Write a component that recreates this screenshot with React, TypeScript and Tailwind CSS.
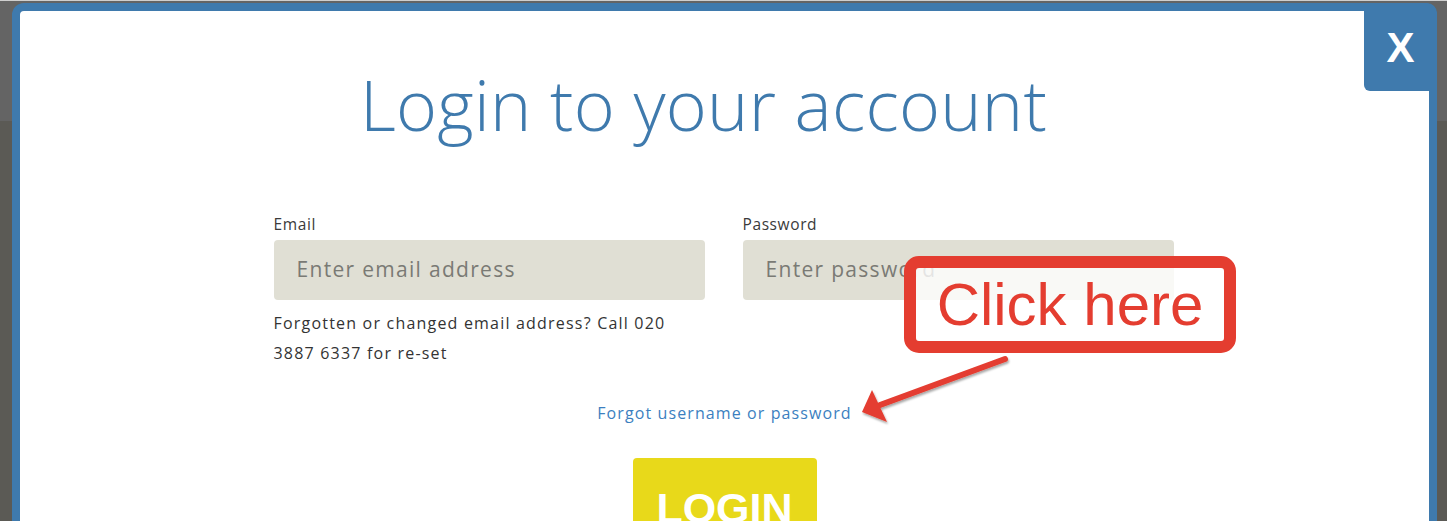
import React from "react";

export default function App() {
  return (
    <div
      className="relative w-[1447px] h-[521px] overflow-hidden bg-[linear-gradient(to_bottom,#cfcfcf_0px,#cfcfcf_1px,#646464_1px,#646464_121px,#5b5a55_121px)]"
      style={{ fontFamily: '"Open Sans", "Noto Sans", sans-serif' }}
    >
      <div className="relative ml-[12px] mt-[3px] w-[1425px] h-[600px] rounded-[12px] border-8 border-[#3f7aad] bg-white">
        <div className="absolute -top-[8px] -right-[8px] flex h-[88px] w-[73px] items-center justify-center rounded-tr-[10px] rounded-bl-[6px] bg-[#3f7aad] pt-[2px]">
          <span
            className="text-[42px] font-bold leading-none text-white"
            style={{ fontFamily: '"Liberation Sans", Arial, sans-serif' }}
          >
            X
          </span>
        </div>

        <h1 className="pt-[48px] pr-[42px] text-center text-[70px] font-light leading-[90px] tracking-[0.25px] text-[#3f7aad]">
          Login to your account
        </h1>

        <div className="mx-auto mt-[63px] grid w-[900px] -translate-x-[1px] grid-cols-2 gap-x-[38px]">
          <div>
            <label className="block text-[15.5px] leading-[24px] tracking-[0.6px] text-[#3a3a3a]">Email</label>
            <div className="mt-[4px] flex h-[60px] items-center rounded-[4px] bg-[#e0dfd4] pl-[23px] text-[21px] tracking-[1.3px] text-[#7a7a74]">
              Enter email address
            </div>
            <p className="mt-[8px] w-[420px] text-[16px] leading-[30px] tracking-[1.2px] text-[#333333]">
              Forgotten or changed email address? Call 020 3887 6337 for re-set
            </p>
          </div>
          <div>
            <label className="block text-[15.5px] leading-[24px] tracking-[0.6px] text-[#3a3a3a]">Password</label>
            <div className="mt-[4px] flex h-[60px] items-center rounded-[4px] bg-[#e0dfd4] pl-[23px] text-[21px] tracking-[1.3px] text-[#7a7a74]">
              Enter password
            </div>
          </div>
        </div>

        <div className="mt-[33px] text-center text-[16px] leading-[24px] tracking-[1.1px] text-[#3c7fbf]">
          Forgot username or password
        </div>

        <div className="mt-[33px] flex justify-center">
          <div
            className="flex h-[90px] w-[184px] justify-center rounded-[4px] bg-[#e8d91a] pt-[25px] text-[43px] font-bold leading-[50px] text-white"
            style={{ fontFamily: '"Liberation Sans", Arial, sans-serif' }}
          >
            LOGIN
          </div>
        </div>
      </div>

      {/* Annotation: Click here */}
      <div className="absolute left-[904px] top-[256px] flex h-[97px] w-[332px] items-center justify-center rounded-[15px] border-[12px] border-[#e43d30] bg-white/80">
        <span
          className="text-[60px] leading-none text-[#e43d30]"
          style={{ fontFamily: '"Liberation Sans", Arial, sans-serif' }}
        >
          Click here
        </span>
      </div>

      {/* Annotation: arrow */}
      <svg className="absolute left-[850px] top-[350px]" width="170" height="80" viewBox="850 350 170 80">
        <defs>
          <filter id="sh" x="-20%" y="-20%" width="140%" height="160%">
            <feDropShadow dx="1" dy="2" stdDeviation="1.2" floodColor="#000" floodOpacity="0.35" />
          </filter>
        </defs>
        <g filter="url(#sh)">
          <line x1="1005" y1="359" x2="880" y2="405" stroke="#e43d30" strokeWidth="6" strokeLinecap="round" />
          <polygon points="862,412 872,390 887,422" fill="#e43d30" />
        </g>
      </svg>
    </div>
  );
}
